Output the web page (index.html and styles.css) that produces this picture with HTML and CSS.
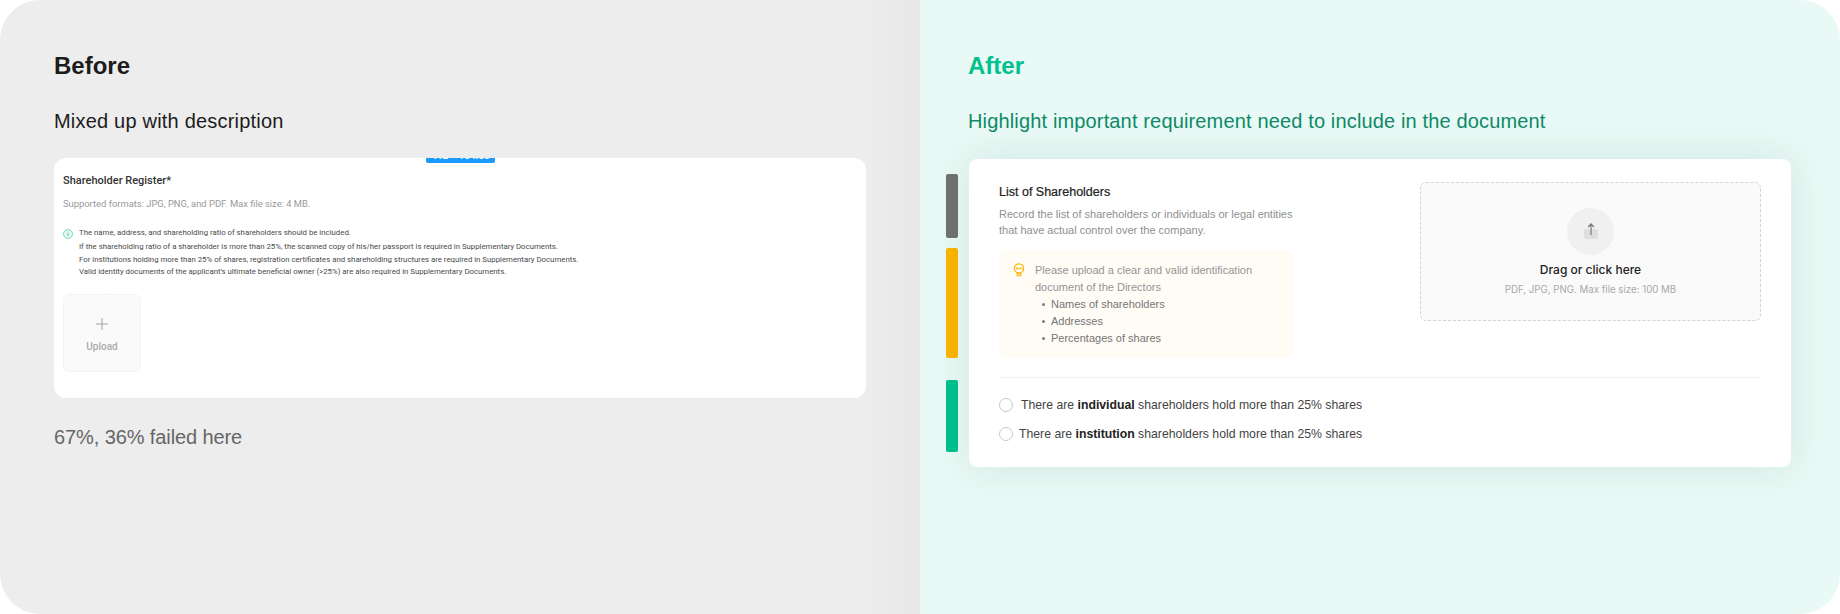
FILE: index.html
```html
<!DOCTYPE html>
<html lang="en">

<head>
    <meta charset="UTF-8">
    <meta name="viewport" content="width=device-width, initial-scale=1.0">
    <title>Before and After</title>
    <link rel="stylesheet" href="styles.css">
</head>

<body>
    <div class="compare">
        <section class="panel panel-before">
            <h2 class="panel-title">Before</h2>
            <p class="panel-sub">Mixed up with description</p>

            <div class="old-card">
                <div class="size-tag">412 × 164.86</div>
                <h3 class="old-title">Shareholder Register*</h3>
                <p class="old-formats">Supported formats: JPG, PNG, and PDF. Max file size: 4 MB.</p>
                <div class="old-note">
                    <svg class="old-note-icon" viewBox="0 0 12 12" width="10" height="10">
                        <circle cx="6" cy="6" r="5.4" fill="#e8f8f4" stroke="#4fd0ae" stroke-width="0.9" />
                        <path d="M6 5.2v3.4" stroke="#2fb892" stroke-width="1" fill="none" />
                        <circle cx="6" cy="3.6" r="0.6" fill="#2fb892" />
                    </svg>
                    <div class="old-note-text">
                        <p class="old-note-first">The name, address, and shareholding ratio of shareholders should be included.</p>
                        <p>If the shareholding ratio of a shareholder is more than 25%, the scanned copy of his/her passport is required in Supplementary Documents.</p>
                        <p>For institutions holding more than 25% of shares, registration certificates and shareholding structures are required in Supplementary Documents.</p>
                        <p>Valid identity documents of the applicant's ultimate beneficial owner (&gt;25%) are also required in Supplementary Documents.</p>
                    </div>
                </div>
                <div class="old-upload">
                    <svg viewBox="0 0 14 14" width="14" height="14">
                        <path d="M7 1v12M1 7h12" stroke="#9a9a9a" stroke-width="0.9" fill="none" />
                    </svg>
                    <span>Upload</span>
                </div>
            </div>

            <p class="panel-foot">67%, 36% failed here</p>
        </section>

        <section class="panel panel-after">
            <h2 class="panel-title">After</h2>
            <p class="panel-sub">Highlight important requirement need to include in the document</p>

            <div class="after-row">
                <div class="bars">
                    <div class="bar bar-gray"></div>
                    <div class="bar bar-yellow"></div>
                    <div class="bar bar-green"></div>
                </div>

                <div class="new-card">
                    <div class="new-top">
                        <div class="new-info">
                            <h3 class="new-title">List of Shareholders</h3>
                            <p class="new-desc">Record the list of shareholders or individuals or legal entities that have actual control over the company.</p>
                            <div class="tip">
                                <svg class="tip-icon" viewBox="0 0 12 14" width="12" height="14">
                                    <circle cx="6" cy="5.4" r="4.6" fill="none" stroke="#fbb500" stroke-width="1.3" />
                                    <path d="M3.8 4.2v2.4M8.2 4.2v2.4M3.8 5.4h4.4" stroke="#fbb500" stroke-width="0.9" fill="none" />
                                    <path d="M4.2 10.6h3.6v2.2H4.2z" fill="none" stroke="#fbb500" stroke-width="1.1" />
                                </svg>
                                <div class="tip-body">
                                    <p>Please upload a clear and valid identification document of the Directors</p>
                                    <ul class="tip-list">
                                        <li>Names of shareholders</li>
                                        <li>Addresses</li>
                                        <li>Percentages of shares</li>
                                    </ul>
                                </div>
                            </div>
                        </div>

                        <div class="dropzone">
                            <div class="drop-circle">
                                <svg viewBox="0 0 16 20" width="16" height="20">
                                    <rect x="1" y="7" width="14" height="10" rx="2" fill="#dedede" />
                                    <path d="M8 13V2M5.2 5 8 2l2.8 3" stroke="#777" stroke-width="1.2" fill="none" />
                                </svg>
                            </div>
                            <div class="drop-title">Drag or click here</div>
                            <div class="drop-sub">PDF, JPG, PNG. Max file size: 100 MB</div>
                        </div>
                    </div>

                    <div class="options">
                        <div class="option">
                            <span class="radio"></span>
                            <span class="option-text">There are <b>individual</b> shareholders hold more than 25% shares</span>
                        </div>
                        <div class="option option-tight">
                            <span class="radio"></span>
                            <span class="option-text">There are <b>institution</b> shareholders hold more than 25% shares</span>
                        </div>
                    </div>
                </div>
            </div>
        </section>
    </div>
</body>

</html>
```

FILE: styles.css
```css
* {
    box-sizing: border-box;
}

body {
    margin: 0;
    background: #fff;
    font-family: 'Liberation Sans', Arial, sans-serif;
}

h2,
h3,
p,
ul {
    margin: 0;
    padding: 0;
}

.compare {
    display: flex;
    width: 1840px;
    height: 614px;
    overflow: hidden;
}

.panel {
    width: 920px;
    height: 614px;
}

.panel-before {
    background: linear-gradient(to right, #ededed 94%, #e7e7e7 100%);
    border-radius: 40px 0 0 40px;
    padding: 51px 54px 0;
    color: #1c1c1c;
}

.panel-after {
    background: #e9f9f5;
    border-radius: 0 40px 40px 0;
    padding: 51px 0 0 0;
}

.panel-title {
    font-size: 24px;
    line-height: 30px;
    font-weight: 700;
}

.panel-sub {
    margin-top: 25px;
    font-size: 20px;
    line-height: 30px;
    font-weight: 400;
    letter-spacing: 0.2px;
}

.panel-foot {
    margin-top: 24px;
    font-size: 20px;
    line-height: 30px;
    letter-spacing: -0.1px;
    color: #666;
}

/* left side, old form */
.old-card {
    position: relative;
    height: 240px;
    margin-top: 22px;
    padding: 15px 9px 0;
    background: #fff;
    border-radius: 12px;
    overflow: hidden;
    font-family: 'Roboto', 'Liberation Sans', sans-serif;
}

.size-tag {
    position: absolute;
    top: -9px;
    left: 372px;
    width: 69px;
    height: 14px;
    border-radius: 2px;
    background: #1a9bfc;
    color: #fff;
    font-size: 10px;
    line-height: 14px;
    font-weight: 500;
    text-align: center;
}

.old-title {
    font-size: 11px;
    line-height: 16px;
    font-weight: 500;
    color: #333;
}

.old-formats {
    margin-top: 8px;
    font-size: 9.4px;
    line-height: 14px;
    color: #999;
}

.old-note {
    display: flex;
    gap: 6px;
    margin-top: 16px;
}

.old-note-icon {
    flex: none;
    margin-top: 2px;
}

.old-note-text {
    font-size: 7.8px;
    line-height: 12.5px;
    color: #4a4a4a;
}

.old-note-first {
    margin-bottom: 1.5px;
}

.old-upload {
    display: flex;
    flex-direction: column;
    align-items: center;
    gap: 10px;
    width: 78px;
    height: 78px;
    margin-top: 15px;
    padding-top: 22px;
    border: 1px dashed #f0f0f0;
    border-radius: 6px;
    background: #fafafa;
    font-size: 10px;
    line-height: 12px;
    font-weight: 500;
    color: #aaa;
}

/* right side, new form */
.panel-after .panel-title {
    padding-left: 48px;
    color: #00c08d;
}

.panel-after .panel-sub {
    padding-left: 48px;
    letter-spacing: 0.15px;
    color: #0d8a68;
}

.after-row {
    display: flex;
    gap: 11px;
    margin-top: 23px;
    padding-left: 26px;
}

.bars {
    display: flex;
    flex-direction: column;
    width: 12px;
    padding-top: 15px;
}

.bar {
    border-radius: 2px;
}

.bar-gray {
    height: 64px;
    background: #6f7371;
}

.bar-yellow {
    height: 110px;
    margin-top: 10px;
    background: #fbb500;
}

.bar-green {
    height: 72px;
    margin-top: 22px;
    background: #00c08d;
}

.new-card {
    width: 822px;
    height: 308px;
    padding: 23px 30px 0;
    background: #fff;
    border-radius: 8px;
    box-shadow: 0 0 40px rgba(0, 70, 50, 0.1);
}

.new-top {
    display: flex;
    justify-content: space-between;
    padding-bottom: 19px;
    border-bottom: 1px solid #f0f0f0;
}

.new-info {
    width: 294px;
}

.new-title {
    font-size: 12.5px;
    line-height: 20px;
    font-weight: 400;
    -webkit-text-stroke: 0.2px #222;
    color: #222;
}

.new-desc {
    margin-top: 4px;
    font-size: 11px;
    line-height: 16px;
    color: #8f8f8f;
    width: 296px;
}

.tip {
    display: flex;
    gap: 10px;
    height: 108px;
    margin-top: 12px;
    padding: 12px 14px 0;
    background: #fffcf6;
    border-radius: 6px;
}

.tip-icon {
    flex: none;
    margin-top: 1px;
}

.tip-body {
    font-size: 11px;
    line-height: 17px;
    color: #949494;
}

.tip-list {
    list-style: none;
    color: #757575;
}

.tip-list li {
    position: relative;
    padding-left: 16px;
}

.tip-list li::before {
    content: '';
    position: absolute;
    left: 7px;
    top: 7px;
    width: 3px;
    height: 3px;
    border-radius: 50%;
    background: #7d7d7d;
}

.dropzone {
    display: flex;
    flex-direction: column;
    align-items: center;
    width: 341px;
    height: 139px;
    padding-top: 25px;
    border: 1px dashed #d4d4d4;
    border-radius: 6px;
    background: #fafafa;
    font-family: 'Inter', 'Liberation Sans', sans-serif;
}

.drop-circle {
    display: flex;
    align-items: center;
    justify-content: center;
    width: 47px;
    height: 47px;
    border-radius: 50%;
    background: #f0f0f0;
}

.drop-title {
    margin-top: 5px;
    font-size: 12px;
    line-height: 20px;
    font-weight: 500;
    color: #222;
}

.drop-sub {
    margin-top: 1px;
    font-size: 9.7px;
    line-height: 18px;
    color: #a8a8a8;
}

.options {
    padding-top: 17px;
}

.option {
    display: flex;
    align-items: center;
    gap: 8px;
    height: 20px;
    font-size: 12.25px;
    color: #444;
}

.option + .option {
    margin-top: 9px;
}

.option-tight {
    gap: 6px;
}

.option-text b {
    font-weight: 700;
    color: #222;
}

.radio {
    flex: none;
    width: 14px;
    height: 14px;
    border: 1px solid #c9c9c9;
    border-radius: 50%;
    background: #fff;
}
```
